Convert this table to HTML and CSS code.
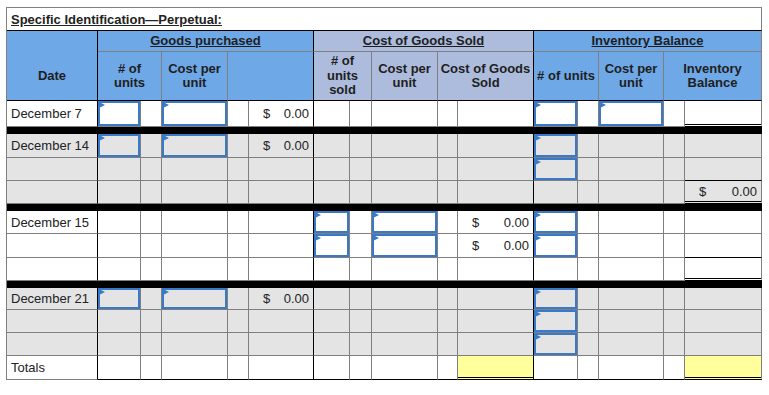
FILE: index.html
```html
<!DOCTYPE html>
<html>
<head>
<meta charset="utf-8">
<link rel="stylesheet" href="styles.css">
</head>
<body>
<div class="sheet">
  <div class="title"><span>Specific Identification—Perpetual:</span></div>
  <div class="head">
    <div class="date">Date</div>
    <div class="grp sec"><u>Goods purchased</u></div>
    <div class="grp sec cogs"><u>Cost of Goods Sold</u></div>
    <div class="grp"><u>Inventory Balance</u></div>
    <div class="sub s2"># of<br>units</div>
    <div class="sub">Cost per<br>unit</div>
    <div class="sub s2 sec"></div>
    <div class="sub s2 cogs"># of<br>units<br>sold</div>
    <div class="sub cogs">Cost per<br>unit</div>
    <div class="sub s2 sec cogs">Cost of Goods<br>Sold</div>
    <div class="sub s2"># of units</div>
    <div class="sub">Cost per<br>unit</div>
    <div class="sub s2">Inventory<br>Balance</div>
  </div>

  <div class="row h26">
    <div class="d">December 7</div>
    <div class="in"></div><div></div><div class="in"></div><div></div><div class="m"><span>$</span><span>0.00</span></div>
    <div></div><div></div><div></div><div></div><div></div>
    <div class="in"></div><div></div><div class="in"></div><div></div><div class="dbl"></div>
  </div>
  <div class="band"></div>

  <div class="row grey h24">
    <div class="d">December 14</div>
    <div class="in"></div><div></div><div class="in"></div><div></div><div class="m"><span>$</span><span>0.00</span></div>
    <div></div><div></div><div></div><div></div><div></div>
    <div class="in"></div><div></div><div></div><div></div><div></div>
  </div>
  <div class="row grey">
    <div class="d"></div>
    <div></div><div></div><div></div><div></div><div></div>
    <div></div><div></div><div></div><div></div><div></div>
    <div class="in"></div><div></div><div></div><div></div><div class="bk"></div>
  </div>
  <div class="row grey">
    <div class="d"></div>
    <div></div><div></div><div></div><div></div><div></div>
    <div></div><div></div><div></div><div></div><div></div>
    <div></div><div></div><div></div><div></div><div class="m dbl"><span>$</span><span>0.00</span></div>
  </div>
  <div class="band"></div>

  <div class="row">
    <div class="d">December 15</div>
    <div></div><div></div><div></div><div></div><div></div>
    <div class="in"></div><div></div><div class="in"></div><div></div><div class="m"><span>$</span><span>0.00</span></div>
    <div class="in"></div><div></div><div></div><div></div><div></div>
  </div>
  <div class="row h24">
    <div class="d"></div>
    <div></div><div></div><div></div><div></div><div></div>
    <div class="in"></div><div></div><div class="in"></div><div></div><div class="m"><span>$</span><span>0.00</span></div>
    <div class="in"></div><div></div><div></div><div></div><div class="bk"></div>
  </div>
  <div class="row">
    <div class="d"></div>
    <div></div><div></div><div></div><div></div><div></div>
    <div></div><div></div><div></div><div></div><div></div>
    <div></div><div></div><div></div><div></div><div class="dbl"></div>
  </div>
  <div class="band"></div>

  <div class="row grey h22">
    <div class="d">December 21</div>
    <div class="in"></div><div></div><div class="in"></div><div></div><div class="m"><span>$</span><span>0.00</span></div>
    <div></div><div></div><div></div><div></div><div></div>
    <div class="in"></div><div></div><div></div><div></div><div></div>
  </div>
  <div class="row grey">
    <div class="d"></div>
    <div></div><div></div><div></div><div></div><div></div>
    <div></div><div></div><div></div><div></div><div></div>
    <div class="in"></div><div></div><div></div><div></div><div></div>
  </div>
  <div class="row grey">
    <div class="d"></div>
    <div></div><div></div><div></div><div></div><div></div>
    <div></div><div></div><div></div><div></div><div></div>
    <div class="in"></div><div></div><div></div><div></div><div></div>
  </div>

  <div class="row tot h24">
    <div class="d">Totals</div>
    <div></div><div></div><div></div><div></div><div></div>
    <div></div><div></div><div></div><div></div><div class="yel dbl"></div>
    <div></div><div></div><div></div><div></div><div class="yel dbl"></div>
  </div>
</div>
</body>
</html>
```

FILE: styles.css
```css
* { box-sizing: border-box; }

body {
  margin: 0;
  background: #fff;
  font-family: "Liberation Sans", Arial, sans-serif;
  font-size: 13px;
  color: #222;
}

.sheet {
  margin: 7px 0 0 6px;
  width: 756px;
  border-left: 1px solid #7f7f7f;
  border-top: 1px solid #7f7f7f;
}

.title {
  height: 23px;
  border-bottom: 1px solid #000;
  border-right: 1px solid #7f7f7f;
  padding-left: 4px;
  font-weight: bold;
  display: flex;
  align-items: center;
}
.title span { text-decoration: underline; }

.head, .row {
  display: grid;
  grid-template-columns: 91px 43px 21px 66px 21px 65px 36px 22px 66px 20px 76px 44px 21px 65px 21px 77px;
}

.head {
  grid-template-rows: 21px 49px;
  font-weight: bold;
  background: #6fa8e6;
  color: #1e1e1e;
}
.head > div {
  border-right: 1px solid #7f7f7f;
  border-bottom: 1px solid #7f7f7f;
  display: flex;
  align-items: center;
  justify-content: center;
  text-align: center;
  line-height: 14.5px;
  white-space: nowrap;
}
.head > .date {
  grid-row: span 2;
  border-right-color: #000;
  border-bottom-color: #000;
  padding-top: 21px;
}
.head > .grp { grid-column: span 5; }
.head > .sec { border-right-color: #000; }
.head > .cogs { background: #adbcdc; }
.head > .sub { border-bottom-color: #000; }
.head > .s2 { grid-column: span 2; }

.row { height: 23px; }
.row.h22 { height: 22px; }
.row.h24 { height: 24px; }
.row.h26 { height: 26px; }
.row.grey { background: #e4e4e4; }

.row > div {
  position: relative;
  border-right: 1px solid #7f7f7f;
  border-bottom: 1px solid #7f7f7f;
}
.row > div:nth-child(1),
.row > div:nth-child(6),
.row > div:nth-child(11) { border-right-color: #000; }

.row > .d {
  display: flex;
  align-items: center;
  padding-left: 4px;
  white-space: nowrap;
}

.row > .in { box-shadow: inset 0 0 0 2px #3a78c8; }
.row > .in::before {
  content: "";
  position: absolute;
  left: 1px;
  top: 1px;
  border-left: 6px solid #3a78c8;
  border-top: 3px solid transparent;
  border-bottom: 3px solid transparent;
}

.row > .m {
  display: flex;
  justify-content: space-between;
  align-items: center;
  padding: 0 4px 0 14px;
}

.row > .bk { border-bottom-color: #000; }
.row > .dbl { border-bottom: 3px double #000; }
.row > .yel { background: #ffff9c; }

.row.tot > div { border-bottom-color: #000; }
.row.tot > div:first-child { border-bottom-color: #7f7f7f; }

.band { height: 7px; background: #000; }
```
